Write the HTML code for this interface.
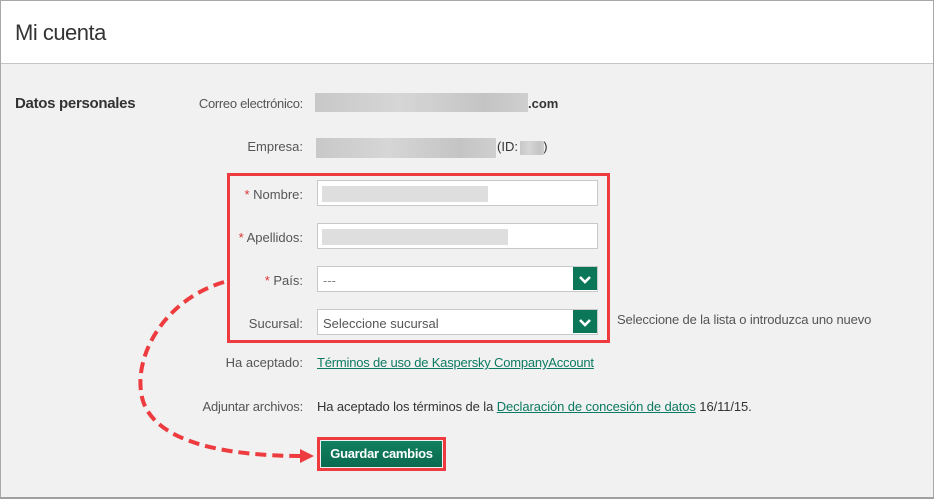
<!DOCTYPE html>
<html><head><meta charset="utf-8"><style>
body{margin:0;width:934px;height:499px;overflow:hidden;font-family:"Liberation Sans",sans-serif;}
.wrap{position:absolute;left:0;top:0;width:932px;height:496px;border:1px solid #a8a8a8;border-bottom:2px solid #a0a0a0;background:#f0f1f0}
.hdr{position:absolute;left:0;top:0;width:932px;height:62px;background:#fff;border-bottom:1px solid #c4c4c4}
.t{position:absolute;white-space:nowrap;font-size:13px;color:#555}
.lbl{text-align:right;width:200px}
.ast{color:#d33}
.blur{position:absolute;background:linear-gradient(90deg,#c8c8c8,#d6d6d6 40%,#c4c4c4 80%,#cfcfcf)}
.inp{position:absolute;background:#fff;border:1px solid #c9c9c9;box-sizing:border-box}
.dd{position:absolute;width:24px;height:23px;background:#0c7658;}
a{color:#0c7a62;text-decoration:underline}
</style></head><body>
<div class="wrap">
<div class="hdr"><div class="t" style="left:14px;top:19px;font-size:22px;color:#333;letter-spacing:-0.5px">Mi cuenta</div></div>
<div class="t" style="left:14px;top:94px;font-size:15px;font-weight:bold;color:#333;letter-spacing:-0.3px">Datos personales</div>
<div class="t lbl" style="left:102px;top:95px;letter-spacing:-0.3px">Correo electrónico:</div>
<div class="t" style="left:527px;top:95px;color:#333;font-weight:bold">.com</div>
<div class="blur" style="left:314px;top:92px;width:213px;height:19px"></div>
<div class="t lbl" style="left:102px;top:138px">Empresa:</div>
<div class="blur" style="left:315px;top:137px;width:180px;height:20px"></div>
<div class="t" style="left:496px;top:138px;color:#333">(ID:&nbsp;&nbsp;&nbsp;&nbsp;&nbsp;&nbsp;&nbsp;)</div>
<div class="blur" style="left:519px;top:140px;width:24px;height:14px"></div>

<div style="position:absolute;left:226px;top:172px;width:377px;height:164px;border:3px solid #ee3b3f"></div>
<div class="t lbl" style="left:102px;top:186px"><span class="ast">*</span> Nombre:</div>
<div class="inp" style="left:316px;top:179px;width:281px;height:26px"></div>
<div class="blur" style="left:321px;top:185px;width:166px;height:16px;background:#dedede"></div>
<div class="t lbl" style="left:102px;top:229px"><span class="ast">*</span> Apellidos:</div>
<div class="inp" style="left:316px;top:222px;width:281px;height:26px"></div>
<div class="blur" style="left:321px;top:228px;width:186px;height:16px;background:#dedede"></div>
<div class="t lbl" style="left:102px;top:272px"><span class="ast">*</span> País:</div>
<div class="inp" style="left:316px;top:265px;width:281px;height:26px"></div>
<div class="t" style="left:322px;top:272px;color:#888">---</div>
<div class="dd" style="left:572px;top:266px"><svg width="24" height="23"><path d="M7 10l5 5 5-5" stroke="#fff" stroke-width="2.6" fill="none"/></svg></div>
<div class="t lbl" style="left:102px;top:315px">Sucursal:</div>
<div class="inp" style="left:316px;top:308px;width:281px;height:26px"></div>
<div class="t" style="left:322px;top:315px;color:#555">Seleccione sucursal</div>
<div class="dd" style="left:572px;top:309px"><svg width="24" height="23"><path d="M7 10l5 5 5-5" stroke="#fff" stroke-width="2.6" fill="none"/></svg></div>
<div class="t" style="left:616px;top:311px;letter-spacing:-0.15px">Seleccione de la lista o introduzca uno nuevo</div>

<div class="t lbl" style="left:102px;top:354px">Ha aceptado:</div>
<div class="t" style="left:316px;top:354px;letter-spacing:-0.2px"><a>Términos de uso de Kaspersky CompanyAccount</a></div>
<div class="t lbl" style="left:102px;top:398px;letter-spacing:-0.2px">Adjuntar archivos:</div>
<div class="t" style="left:316px;top:398px;color:#333;letter-spacing:-0.1px">Ha aceptado los términos de la <a>Declaración de concesión de datos</a> 16/11/15.</div>

<div style="position:absolute;left:316px;top:436px;width:129px;height:34px;border:3px solid #ee3b3f;box-sizing:border-box"><div style="position:absolute;left:1px;top:1px;right:1px;bottom:1px;background:linear-gradient(#11815f,#0a6a4f);color:#fff;font-size:13px;font-weight:bold;text-align:center;line-height:26px;letter-spacing:-0.3px">Guardar cambios</div></div>

<svg style="position:absolute;left:0;top:0" width="934" height="499"><path d="M223 281 C160 300 130 360 142 400 C155 440 220 455 302 455" stroke="#ee3b3f" stroke-width="4" fill="none" stroke-dasharray="11 6"/><path d="M299 448 L313 455 L299 462Z" fill="#ee3b3f"/></svg>
</div>
</body></html>
